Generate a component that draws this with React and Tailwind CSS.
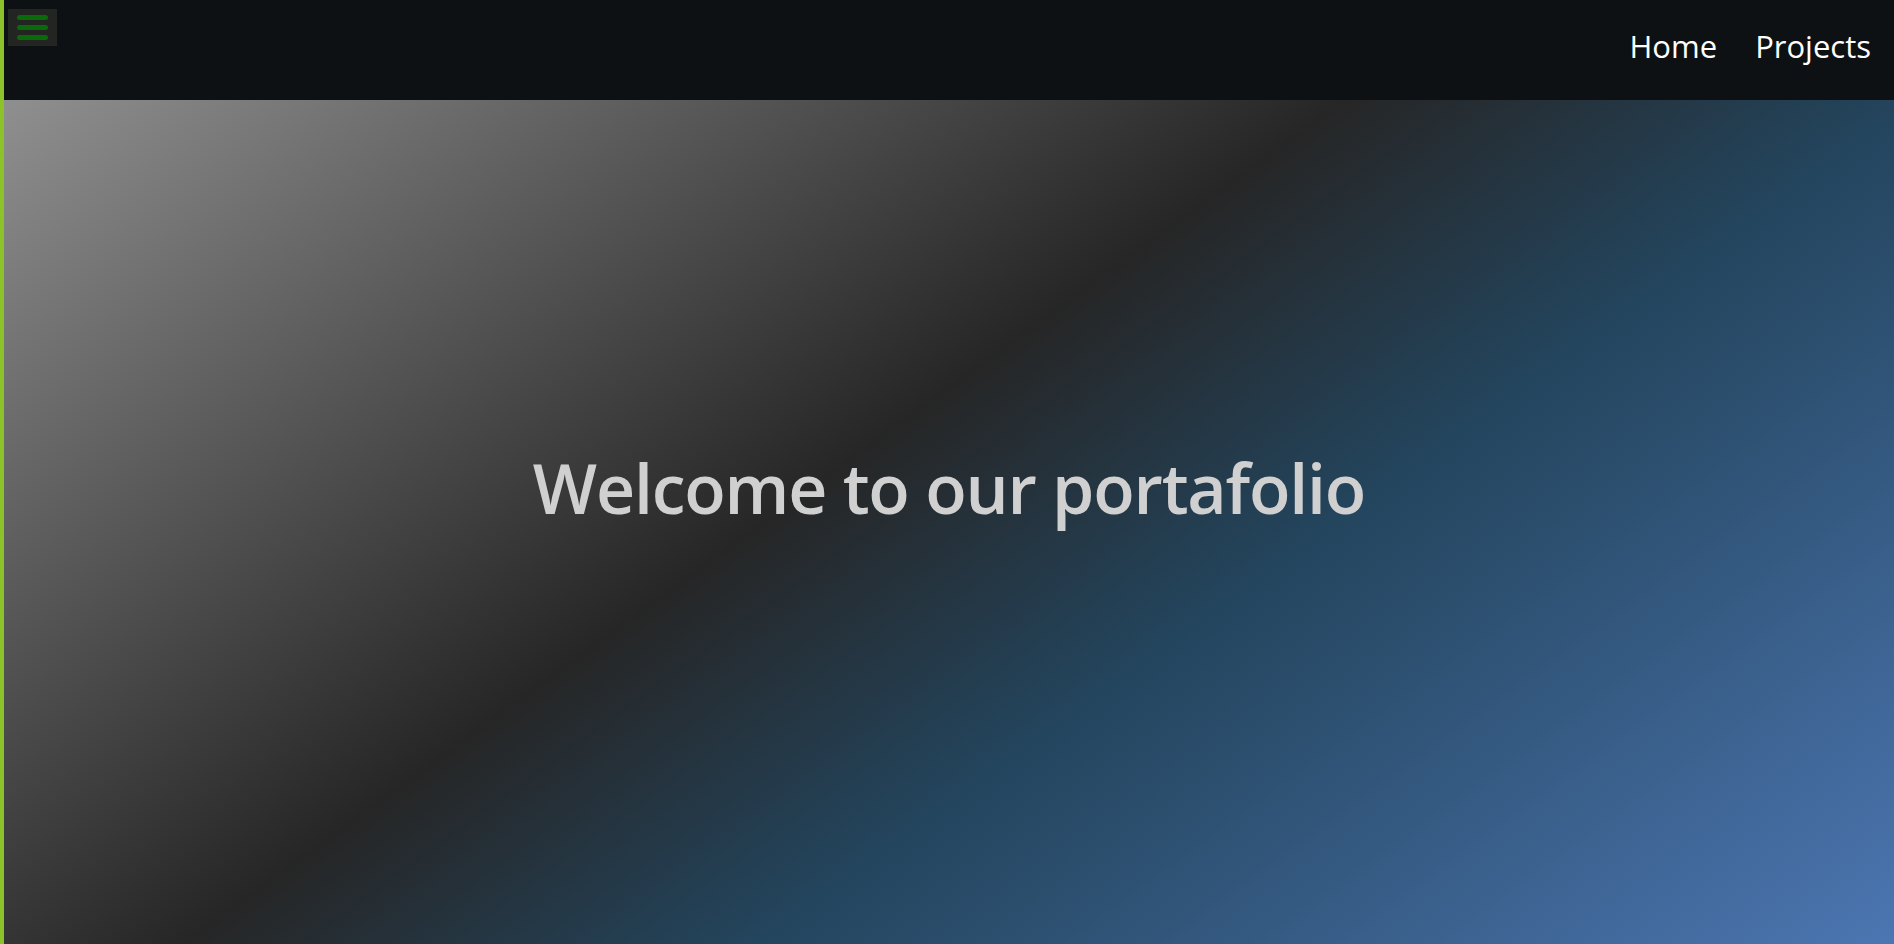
export default function App() {
  return (
    <div className="h-[944px] w-full overflow-hidden border-l-4 border-[#8cc22a] flex flex-col" style={{ fontFamily: '"Open Sans", "Noto Sans", sans-serif' }}>
      <header className="h-[100px] shrink-0 bg-[#0d1114] flex justify-between items-start">
        <button className="mt-[9px] ml-[4px] w-[49px] h-[37px] bg-[#232523] flex flex-col justify-center items-center gap-[5px]">
          <span className="block w-[31px] h-[5px] rounded-full bg-[#0a6a0a]" />
          <span className="block w-[31px] h-[5px] rounded-full bg-[#0a6a0a]" />
          <span className="block w-[31px] h-[5px] rounded-full bg-[#0a6a0a]" />
        </button>
        <nav className="flex items-center gap-[38px] mr-[23px] h-[92px] text-[31px] text-white">
          <a>Home</a>
          <a>Projects</a>
        </nav>
      </header>
      <main className="flex-1 flex items-center justify-center bg-[linear-gradient(144deg,#8f8f8f_0%,#262626_44%,#23445c_62%,#4c76b2_100%)] pb-[68px]">
        <h1 className="text-[68px] font-semibold tracking-[-1.2px] text-[#d0d0d0]">Welcome to our portafolio</h1>
      </main>
    </div>
  );
}
